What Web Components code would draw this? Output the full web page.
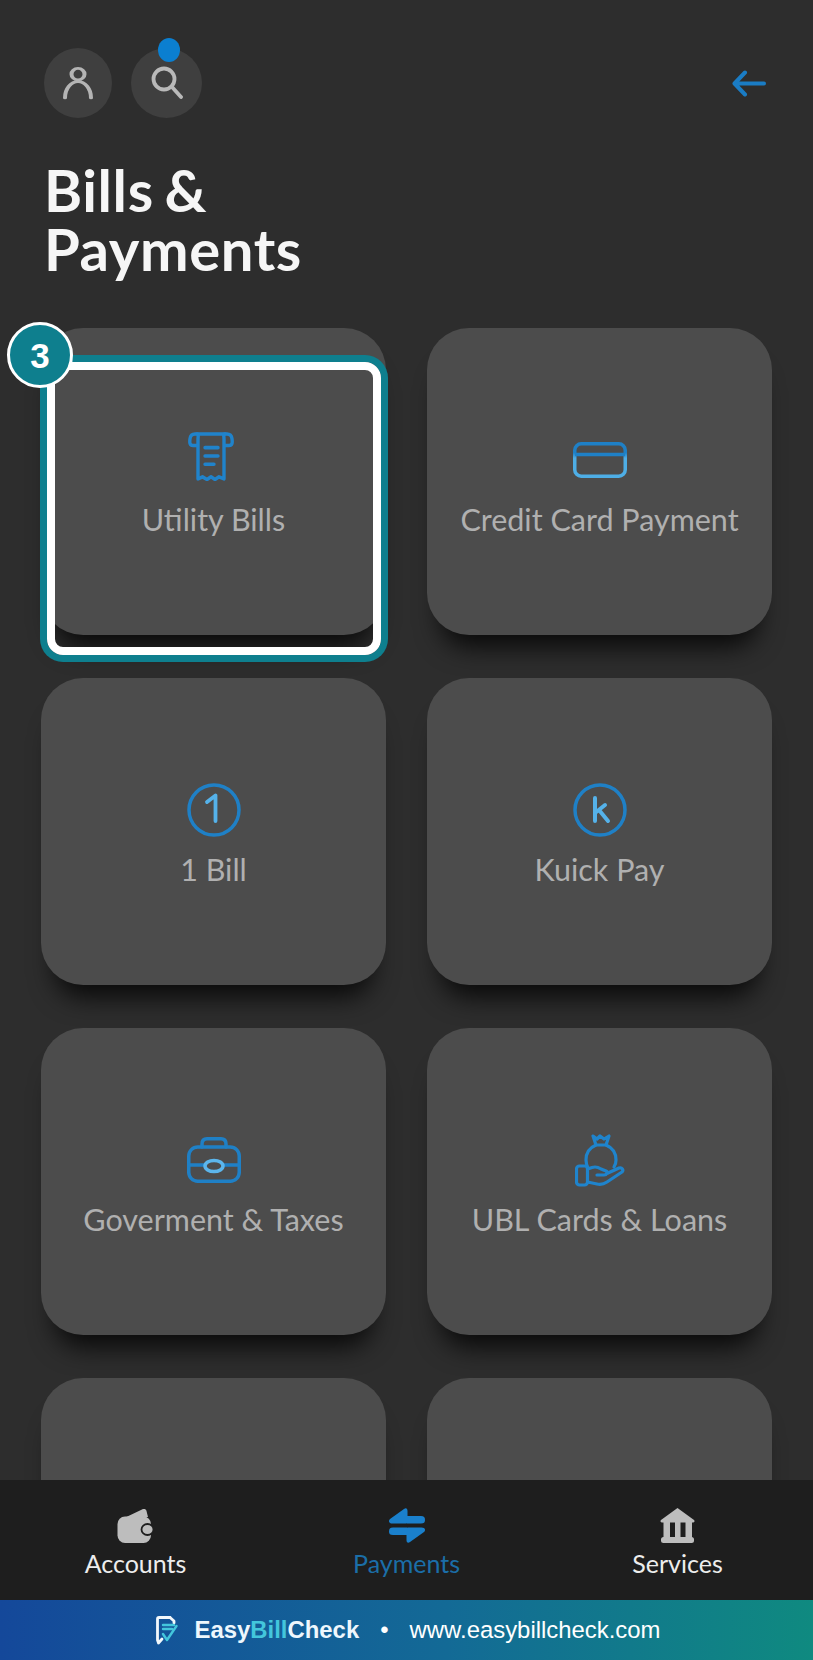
<!DOCTYPE html>
<html lang="en">
<head>
<meta charset="utf-8">
<title>Bills &amp; Payments</title>
<style>
  html, body { margin: 0; padding: 0; background: #2d2d2d; }
  body { font-family: Lato, "Noto Sans", sans-serif; }
</style>
</head>
<body>
<x-app>
  <x-topbar slot="top">
    <x-round-button style="width:68px">
      <svg viewBox="0 0 30 50" width="30" height="34" fill="none" stroke="#b4b4b4" stroke-width="4" stroke-linecap="round" preserveAspectRatio="none"><ellipse cx="15" cy="12" rx="6.5" ry="8.5"/><path d="M2 47C2 33 8 23 15 23S28 33 28 47"/></svg>
    </x-round-button>
    <x-round-button dot style="width:71px">
      <svg viewBox="0 0 32 34" width="32" height="34" fill="none" stroke="#b9b9b9" stroke-width="3.8" stroke-linecap="round"><circle cx="13" cy="13" r="10.5"/><path d="M21 21L30 31"/></svg>
    </x-round-button>
    <svg slot="end" viewBox="0 0 34 27" width="34" height="27" fill="none" stroke="#1a7cc4" stroke-width="4" stroke-linecap="round" stroke-linejoin="round"><path d="M13 2.500L2.500 13.500L13 24.500M3 13.500H32"/></svg>
  </x-topbar>
  <x-title slot="top">Bills &amp;<br>Payments</x-title>

  <x-tile label="Utility Bills">
    <svg slot="icon" style="margin:0 6px 8px 0" viewBox="0 0 46 47" width="46" height="49" preserveAspectRatio="none" fill="none" stroke="#2083cb" stroke-width="3.400" stroke-linejoin="round" stroke-linecap="round">
      <path d="M9 13H5C1.500 13 1.500 10 2 6.500C2.500 3 4 2 7 2H39C42 2 43.500 3 44 6.500C44.500 10 44.500 13 41 13H37"/>
      <path d="M9 2C11 2 10 4 10 7V45L14.500 43L19 45.500L23 43L27 45.500L31 43L36 45V7C36 4 35 2 37 2"/>
      <path d="M17 15H30M17 23H30M17 31H26" stroke-width="3.400"/>
    </svg>
    <x-callout slot="overlay" number="3"></x-callout>
  </x-tile>
  <x-tile label="Credit Card Payment">
    <svg slot="icon" viewBox="0 0 54 36" width="54" height="36" fill="none" stroke-width="3.500">
      <defs><linearGradient id="cg" x1="0" y1="0" x2="0" y2="36" gradientUnits="userSpaceOnUse"><stop offset=".3" stop-color="#1f80c6"/><stop offset=".45" stop-color="#4eaee6"/></linearGradient></defs>
      <rect x="1.750" y="1.750" width="50.500" height="32.500" rx="6.500" stroke="url(#cg)"/><path d="M2 12.500H52" stroke="#1f80c6"/>
    </svg>
  </x-tile>
  <x-tile label="1 Bill">
    <svg slot="icon" viewBox="0 0 54 54" width="54" height="54" fill="none" stroke-linecap="round" stroke-linejoin="round">
      <circle cx="27" cy="27" r="25" stroke="#1f80c6" stroke-width="3.500"/><path d="M20 19L28.500 12.500V38" stroke="#55b2ea" stroke-width="3.800"/>
    </svg>
  </x-tile>
  <x-tile label="Kuick Pay">
    <svg slot="icon" viewBox="0 0 54 54" width="54" height="54" fill="none" stroke-linecap="round" stroke-linejoin="round">
      <circle cx="27" cy="27" r="25" stroke="#1f80c6" stroke-width="3.500"/><path d="M22 15V38M22 30L32 22M26 27L35 38" stroke="#55b2ea" stroke-width="4"/>
    </svg>
  </x-tile>
  <x-tile label="Goverment &amp; Taxes">
    <svg slot="icon" viewBox="0 0 54 46" width="54" height="46" fill="none" stroke="#1f80c6" stroke-width="3.500" stroke-linejoin="round" stroke-linecap="round">
      <path d="M15 10V7C15 3 17 1.750 20 1.750H34C37 1.750 39 3 39 7V10"/>
      <rect x="1.750" y="10" width="50.500" height="34.250" rx="9"/>
      <path d="M2 28H18M36 28H52"/>
      <ellipse cx="27" cy="29" rx="9" ry="5.500" stroke="#5cb6ec"/>
    </svg>
  </x-tile>
  <x-tile label="UBL Cards &amp; Loans">
    <svg slot="icon" viewBox="0 0 50 53" width="50" height="53" fill="none" stroke="#1f84cc" stroke-width="3.200" stroke-linejoin="round" stroke-linecap="round">
      <path d="M18 2L22 5L25 2L29 5L34 2L31 11H21Z"/>
      <path d="M21 11C14 14 11 20 11 26C11 29 12 32 13 34M31 11C38 14 41 20 41 26C41 29 40.500 31 39 33"/>
      <rect x="1.500" y="32" width="11" height="19" rx="3"/>
      <path d="M12.500 35L17 33.500C20 32.500 23 33 26 35L31 37C33 38 32 41 29 41H22"/>
      <path d="M12.500 48L22 50C26 51 29 50 32 48L47 38C49 36 47 33 44 34L33 39"/>
    </svg>
  </x-tile>
  <x-tile></x-tile>
  <x-tile></x-tile>

  <x-bottom-nav slot="nav">
    <x-nav-item label="Accounts">
      <svg viewBox="0 0 38 35" width="38" height="35"><path fill="#bdbdbd" d="M3 12L25 1.500C27 .5 29 1 29.500 3L31 9H8C5 9 4 10 3 12Z"/><rect x=".5" y="8.500" width="33.500" height="26.500" rx="7.500" fill="#bdbdbd"/><ellipse cx="30.500" cy="21.500" rx="6" ry="5.500" fill="#bdbdbd" stroke="#1e1e1e" stroke-width="1.800"/></svg>
    </x-nav-item>
    <x-nav-item label="Payments" active>
      <svg viewBox="0 0 36 35" width="36" height="35" fill="#1a80cc"><path d="M15 1C17 -.5 18.500 .5 18.500 3V13.500C18.500 15 18 15.500 16.500 15.500H3.500C0 15.500 -1 13 1 11Z"/><path d="M18 8H32C35 8 36 9.500 36 12S35 15.500 32 15.500H18Z"/><path d="M21 34C19 35.500 17.500 34.500 17.500 32V21.500C17.500 20 18 19.500 19.500 19.500H32.500C36 19.500 37 22 35 24Z"/><path d="M18 19.500H4C1 19.500 0 21 0 23.500S1 27 4 27H18Z"/></svg>
    </x-nav-item>
    <x-nav-item label="Services">
      <svg viewBox="0 0 35 35" width="35" height="35" fill="#bdbdbd"><path d="M17.500 0L34 12C35 13 34.500 14.500 33 14.500H2C.5 14.500 0 13 1 12Z"/><rect x="3.500" y="14" width="6.500" height="16"/><rect x="15" y="14" width="5.500" height="16"/><rect x="25.500" y="14" width="6.500" height="16"/><rect x="1" y="29" width="33" height="6" rx="2.500"/></svg>
    </x-nav-item>
  </x-bottom-nav>
  <x-banner slot="nav"></x-banner>
</x-app>

<script>
function define(name, css, html, extra) {
  customElements.define(name, class extends HTMLElement {
    constructor() {
      super();
      const root = this.attachShadow({ mode: 'open' });
      root.innerHTML = '<style>' + css + '</style>' + html;
    }
    connectedCallback() { if (extra) extra(this, this.shadowRoot); }
  });
}

define('x-app',
  `:host { display:flex; flex-direction:column; width:813px; height:1660px; overflow:hidden; background:#2d2d2d; font-family:Lato,"Noto Sans",sans-serif; }
   main { flex:1; min-height:0; overflow:hidden; position:relative; }
   .grid { display:grid; grid-template-columns:345px 345px; column-gap:41px; row-gap:43px; padding:50px 41px 0; }`,
  `<main><slot name="top"></slot><div class="grid"><slot></slot></div></main><slot name="nav"></slot>`);

define('x-topbar',
  `:host { display:flex; align-items:center; gap:19px; padding:48px 47px 0 44px; }
   .end { margin-left:auto; display:flex; }`,
  `<slot></slot><div class="end"><slot name="end"></slot></div>`);

define('x-round-button',
  `:host { position:relative; display:flex; align-items:center; justify-content:center; width:69px; height:70px; border-radius:50%; background:#3f3f3f; }
   .dot { position:absolute; top:-10px; left:27px; width:22px; height:24px; border-radius:50%; background:#0b7fd0; display:none; }
   :host([dot]) .dot { display:block; }`,
  `<slot></slot><span class="dot"></span>`);

define('x-title',
  `:host { display:block; margin:42px 0 0 44px; font:700 58px/59px Lato,"Noto Sans",sans-serif; letter-spacing:.6px; word-spacing:-4px; color:#f6f6f6; }`,
  `<slot></slot>`);

define('x-tile',
  `:host { position:relative; display:flex; flex-direction:column; align-items:center; box-sizing:border-box; height:307px; padding-top:104px; border-radius:42px; background:#4c4c4c; box-shadow:0 26px 26px -14px rgba(0,0,0,.8); }
   .icon { height:56px; display:flex; align-items:center; justify-content:center; }
   .label { margin-top:13px; font:400 30.500px/36px Lato,"Noto Sans",sans-serif; color:#b0b0b0; white-space:nowrap; }`,
  `<div class="icon"><slot name="icon"></slot></div><div class="label"></div><slot name="overlay"></slot>`,
  (el, root) => { root.querySelector('.label').textContent = el.getAttribute('label') || ''; });

define('x-callout',
  `:host { position:absolute; left:6px; top:34px; box-sizing:border-box; width:334px; height:293px; border:8px solid #fff; border-radius:16px; box-shadow:0 0 0 7px #0e7f8e; z-index:5; }
   .badge { position:absolute; left:-48px; top:-48px; box-sizing:border-box; width:66px; height:66px; border:3px solid #fff; border-radius:50%; background:#0e7f8e; color:#fff; display:flex; align-items:center; justify-content:center; font:700 35px/1 "Liberation Sans",sans-serif; }`,
  `<span class="badge"></span>`,
  (el, root) => { root.querySelector('.badge').textContent = el.getAttribute('number'); });

define('x-bottom-nav',
  `:host { display:grid; grid-template-columns:repeat(3,1fr); height:120px; background:#1e1e1e; position:relative; z-index:6; }`,
  `<slot></slot>`);

define('x-nav-item',
  `:host { display:flex; flex-direction:column; align-items:center; padding-top:28px; }
   .icon { height:35px; display:flex; }
   .label { margin-top:4px; font:400 25px/32px Lato,"Noto Sans",sans-serif; color:#ededed; }
   :host([active]) .label { color:#1b6ea8; }`,
  `<div class="icon"><slot></slot></div><div class="label"></div>`,
  (el, root) => { root.querySelector('.label').textContent = el.getAttribute('label'); });

define('x-banner',
  `:host { display:flex; align-items:center; justify-content:center; height:60px; padding-left:3px; box-sizing:border-box; background:linear-gradient(90deg,#14489a 0%,#136a96 55%,#0f8a80 100%); color:#fff; font:400 23.900px/1 "Liberation Sans",sans-serif; position:relative; z-index:6; }
   svg { margin-right:17px; }
   b { font-weight:700; color:#eef7fd; }
   b span { color:#43c6dc; }
   .dot { margin:0 21px; }`,
  `<svg viewBox="0 0 22 29" width="22" height="29" fill="none" stroke-linejoin="round" stroke-linecap="round">
     <path d="M14 1.500H3C2 1.500 1.500 2 1.500 3V24L2.500 27L6 23" stroke="#f2f8fc" stroke-width="2.800"/>
     <path d="M14 1.500L18 5V7" stroke="#f2f8fc" stroke-width="2.800"/>
     <path d="M7 9H18M7 13H16" stroke="#43c6dc" stroke-width="2.400"/>
     <path d="M7 18L11 24L20.500 10" stroke="#43c6dc" stroke-width="2.400"/>
   </svg><b>Easy<span>Bill</span>Check</b><span class="dot">•</span><span>www.easybillcheck.com</span>`);
</script>
</body>
</html>
